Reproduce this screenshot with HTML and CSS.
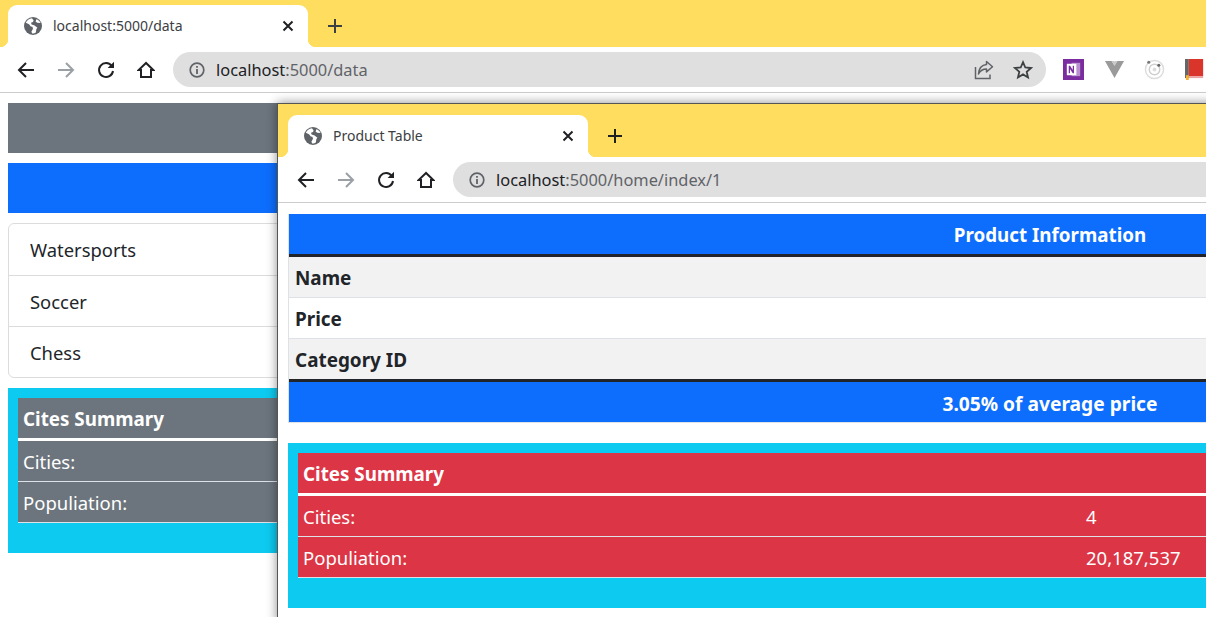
FILE: index.html
```html
<!DOCTYPE html>
<html lang="en">
<head>
    <meta charset="UTF-8">
    <meta name="viewport" content="width=device-width, initial-scale=1.0">
    <title>Product Table</title>
    <link rel="stylesheet" href="styles.css">
</head>
<body>

<svg class="sprite" aria-hidden="true">
    <symbol id="globe" viewBox="0 0 18 18">
        <circle cx="9" cy="9" r="9" fill="#5f6368"/>
        <path d="M8 1.2C5 1.6 2.8 3.4 1.8 5.8L5 7.2l1.8 2.4 1.6.2.6 2-1.6 3 .8 1.6c1.6 0 2.6-.4 3.6-1l.6-3.4 1-1.2-2.8-2.4-3-1-.6-1.6 2-.8.6-1.4z" fill="#fff"/>
        <path d="M12.4 2.2l-.8 2.2 1.6 1.4 3.4.2c-.8-1.8-2.4-3.2-4.2-3.8z" fill="#fff"/>
    </symbol>
    <symbol id="close" viewBox="0 0 12 12">
        <path d="M1.5 1.5l9 9M10.5 1.5l-9 9" fill="none" stroke="#202124" stroke-width="2"/>
    </symbol>
    <symbol id="plus" viewBox="0 0 16 16">
        <path d="M8 1v14M1 8h14" fill="none" stroke="currentColor" stroke-width="2"/>
    </symbol>
    <symbol id="arrow" viewBox="0 0 18 18">
        <path d="M17 9H2M9 2L2 9l7 7" fill="none" stroke="currentColor" stroke-width="2"/>
    </symbol>
    <symbol id="reload" viewBox="0 0 18 18">
        <path d="M14.8 5A7 7 0 1 0 16 10" fill="none" stroke="#202124" stroke-width="2"/>
        <path d="M10.6 7h6.4V.8z" fill="#202124"/>
    </symbol>
    <symbol id="home" viewBox="0 0 18 18">
        <path d="M9 2L1.6 9H4v7h10V9h2.4z" fill="none" stroke="#202124" stroke-width="2" stroke-linejoin="miter"/>
    </symbol>
    <symbol id="info" viewBox="0 0 16 16">
        <circle cx="8" cy="8" r="6.8" fill="none" stroke="#5f6368" stroke-width="1.7"/>
        <path d="M7.1 7h1.8v5H7.1zM7.1 4h1.8v1.8H7.1z" fill="#5f6368"/>
    </symbol>
    <symbol id="share" viewBox="0 0 20 20">
        <path d="M1.5 7v11.5h14.5v-4" fill="none" stroke="#5f6368" stroke-width="1.5"/>
        <path d="M12.5 1.5l6 5.2-6 5.2V9C8.800 9 6.400 10.500 4.500 14c.4-5 3-8.800 8-9.400z" fill="none" stroke="#5f6368" stroke-width="1.5" stroke-linejoin="round"/>
    </symbol>
    <symbol id="star" viewBox="0 0 20 20">
        <path d="M10 2.200l2.300 5.300 5.700.5-4.300 3.800 1.300 5.600-5-3-5 3 1.300-5.600L2 8l5.700-.5z" fill="none" stroke="#3c4043" stroke-width="1.800"/>
    </symbol>
</svg>

<div class="desktop">

    <!-- window behind -->
    <div class="window window-back">
        <div class="tabstrip">
            <div class="tab">
                <svg class="tab-icon"><use href="#globe"/></svg>
                <span class="tab-title">localhost:5000/data</span>
                <svg class="tab-close"><use href="#close"/></svg>
            </div>
            <svg class="new-tab"><use href="#plus"/></svg>
        </div>
        <div class="toolbar">
            <svg class="nav-btn"><use href="#arrow"/></svg>
            <svg class="nav-btn forward"><use href="#arrow"/></svg>
            <svg class="nav-btn"><use href="#reload"/></svg>
            <svg class="nav-btn"><use href="#home"/></svg>
            <div class="omnibox omnibox-short">
                <svg class="info-icon"><use href="#info"/></svg>
                <span class="url">localhost<span class="url-rest">:5000/data</span></span>
                <svg class="omni-action"><use href="#share"/></svg>
                <svg class="omni-action"><use href="#star"/></svg>
            </div>
            <div class="extensions">
                <svg class="ext" viewBox="0 0 22 22">
                    <rect width="22" height="22" fill="#7b2da0"/>
                    <rect x="9" y="4" width="9" height="14" fill="#b98fd0"/>
                    <rect x="4" y="5" width="10" height="12" fill="#fff"/>
                    <path d="M6 15V7h1.400l2.800 4.600V7h1.300v8h-1.300L7.300 10.400V15z" fill="#7b2da0"/>
                </svg>
                <svg class="ext" viewBox="0 0 22 22">
                    <path d="M1 2h7l3 5 3-5h7l-10 18z" fill="#9a9a9a"/>
                    <path d="M8 2l3 5 3-5h-2.500L11 3l-.5-1z" fill="#c8c8c8"/>
                </svg>
                <svg class="ext" viewBox="0 0 22 22">
                    <circle cx="11" cy="11" r="9.500" fill="none" stroke="#dcdcdc" stroke-width="1.500"/>
                    <circle cx="11" cy="11" r="5.500" fill="none" stroke="#cfcfcf" stroke-width="1.500"/>
                    <circle cx="11" cy="11" r="2" fill="#dcdcdc"/>
                    <circle cx="5" cy="3.500" r="1.600" fill="#777"/>
                    <circle cx="15.500" cy="6.500" r="1.600" fill="#666"/>
                </svg>
                <svg class="ext" viewBox="0 0 22 22">
                    <rect x="0" y="0" width="4" height="20" fill="#666"/>
                    <rect x="4" y="0" width="15" height="18" fill="#d9352b"/>
                    <rect x="4" y="18" width="15" height="2" fill="#e8a0a0"/>
                    <rect x="1" y="17" width="3" height="5" fill="#f2b632"/>
                </svg>
            </div>
        </div>
        <div class="page">
            <div class="banner bg-gray"></div>
            <div class="banner bg-blue"></div>
            <ul class="list">
                <li>Watersports</li>
                <li>Soccer</li>
                <li>Chess</li>
            </ul>
            <div class="summary-box">
                <table class="summary bg-gray">
                    <tr class="head"><th colspan="2">Cites Summary</th></tr>
                    <tr><td>Cities:</td><td></td></tr>
                    <tr><td>Populiation:</td><td></td></tr>
                </table>
            </div>
        </div>
    </div>

    <!-- window in front -->
    <div class="window window-front">
        <div class="tabstrip">
            <div class="tab">
                <svg class="tab-icon"><use href="#globe"/></svg>
                <span class="tab-title">Product Table</span>
                <svg class="tab-close"><use href="#close"/></svg>
            </div>
            <svg class="new-tab"><use href="#plus"/></svg>
        </div>
        <div class="toolbar">
            <svg class="nav-btn"><use href="#arrow"/></svg>
            <svg class="nav-btn forward"><use href="#arrow"/></svg>
            <svg class="nav-btn"><use href="#reload"/></svg>
            <svg class="nav-btn"><use href="#home"/></svg>
            <div class="omnibox">
                <svg class="info-icon"><use href="#info"/></svg>
                <span class="url">localhost<span class="url-rest">:5000/home/index/1</span></span>
            </div>
        </div>
        <div class="page page-front">
            <table class="product">
                <thead>
                    <tr><th colspan="2" class="bg-blue">Product Information</th></tr>
                </thead>
                <tbody>
                    <tr class="odd"><th>Name</th><td></td></tr>
                    <tr><th>Price</th><td></td></tr>
                    <tr class="odd"><th>Category ID</th><td></td></tr>
                </tbody>
                <tfoot>
                    <tr><th colspan="2" class="bg-blue">3.05% of average price</th></tr>
                </tfoot>
            </table>
            <div class="summary-box">
                <table class="summary bg-red">
                    <colgroup><col class="label-col"><col></colgroup>
                    <tr class="head"><th colspan="2">Cites Summary</th></tr>
                    <tr><td>Cities:</td><td>4</td></tr>
                    <tr><td>Populiation:</td><td>20,187,537</td></tr>
                </table>
            </div>
        </div>
    </div>

</div>

</body>
</html>
```
FILE: styles.css
```css
html, body {
    margin: 0;
    height: 100%;
    overflow: hidden;
    background-color: #fff;
}
body {
    font-family: "Noto Sans", "Open Sans", Arial, sans-serif;
    color: #212529;
}
.sprite {
    display: none;
}
.desktop {
    position: relative;
    width: 1206px;
    height: 617px;
    overflow: hidden;
}
.window {
    position: absolute;
    background-color: #fff;
}
.window-back {
    left: 0;
    top: 0;
    width: 1206px;
}
.window-front {
    left: 278px;
    top: 104px;
    width: 1544px;
    height: 520px;
    border-left: 1px solid #555;
    border-top: 1px solid #555;
    margin: -1px 0 0 -1px;
    box-shadow: 0 0 10px rgba(0, 0, 0, 0.45);
}

/* browser chrome */
.tabstrip {
    display: flex;
    align-items: flex-end;
    height: 47px;
    background-color: #ffdd5f;
    padding-left: 8px;
    box-sizing: border-box;
}
.window-front .tabstrip {
    height: 53px;
    padding-left: 10px;
}
.tab {
    display: flex;
    align-items: center;
    width: 300px;
    height: 42px;
    padding: 0 14px 0 16px;
    box-sizing: border-box;
    background-color: #fff;
    border-radius: 9px 9px 0 0;
    position: relative;
}
.tab::before,
.tab::after {
    content: "";
    position: absolute;
    bottom: 0;
    width: 8px;
    height: 8px;
    background-color: #fff;
}
.tab::before {
    left: -8px;
    background: radial-gradient(circle at 0 0, #ffdd5f 8px, #fff 8.5px);
}
.tab::after {
    right: -8px;
    background: radial-gradient(circle at 100% 0, #ffdd5f 8px, #fff 8.5px);
}
.tab-icon {
    width: 18px;
    height: 18px;
    flex: none;
}
.tab-title {
    flex: 1;
    margin-left: 11px;
    padding-bottom: 2px;
    font-size: 14px;
    color: #3c4043;
}
.tab-close {
    width: 12px;
    height: 12px;
}
.new-tab {
    width: 16px;
    height: 16px;
    margin: 0 0 13px 19px;
    color: #3c4043;
}
.window-front .new-tab {
    color: #202124;
}
.toolbar {
    display: flex;
    align-items: center;
    height: 46px;
    box-sizing: border-box;
    padding: 0 0 0 17px;
    gap: 22px;
    background-color: #fff;
    border-bottom: 1px solid #ccc;
}
.window-front .toolbar {
    padding-left: 19px;
}
.nav-btn {
    width: 18px;
    height: 18px;
    flex: none;
    color: #202124;
}
.nav-btn.forward {
    color: #9aa0a6;
    transform: scaleX(-1);
}
.omnibox {
    display: flex;
    align-items: center;
    height: 35px;
    flex: 1;
    margin-left: -4px;
    padding: 0 14px 0 16px;
    background-color: #dfdfdf;
    border-radius: 18px;
    box-sizing: border-box;
}
.omnibox-short {
    flex: none;
    width: 873px;
}
.info-icon {
    width: 16px;
    height: 16px;
    flex: none;
}
.url {
    flex: 1;
    margin-left: 11px;
    font-size: 16.4px;
    color: #202124;
}
.url-rest {
    color: #5f6368;
}
.omni-action {
    width: 20px;
    height: 20px;
    margin-left: 20px;
    margin-right: -1px;
}
.extensions {
    display: flex;
    gap: 19.5px;
    margin-left: -5px;
}
.ext {
    width: 21px;
    height: 21px;
    flex: none;
}

/* page content */
.page {
    padding: 10px 8px 0;
}
.page-front {
    padding: 11px 10px 0;
}
.banner {
    height: 50px;
    margin-bottom: 10px;
}
.bg-gray { background-color: #6c757d; }
.bg-blue { background-color: #0d6efd; }
.bg-red { background-color: #dc3545; }
.list {
    list-style: none;
    margin: 0 0 10px;
    padding: 0;
    border: 1px solid #dcdcdc;
    border-radius: 6px;
}
.list li {
    height: 50px;
    line-height: 52px;
    padding-left: 21px;
    font-size: 18.4px;
    border-bottom: 1px solid #dcdcdc;
}
.list li:first-child {
    height: 51px;
}
.list li:last-child {
    border-bottom: none;
}
table {
    width: 100%;
    border-collapse: separate;
    border-spacing: 0;
    table-layout: fixed;
    font-size: 18.5px;
}
th, td {
    box-sizing: border-box;
    padding: 0 5px;
    height: 40px;
    text-align: left;
}
th {
    font-size: 18.8px;
}
.product {
    border: 1px solid #dee2e6;
    border-top: none;
}
.product th {
    padding-top: 2px;
}
.product thead th,
.product tfoot th {
    height: 43px;
    text-align: center;
    color: #fff;
}
.product thead th {
    border-bottom: 3px solid #212529;
}
.product tfoot th {
    border-top: 3px solid #212529;
    font-size: 19.2px;
}
.product tbody th,
.product tbody td {
    height: 41px;
    border-bottom: 1px solid #dee2e6;
}
.product tbody th {
    padding-left: 6px;
    font-size: 18.9px;
}
.product tbody tr:last-child th,
.product tbody tr:last-child td {
    height: 40px;
    border-bottom: none;
}
.product .odd {
    background-color: #f2f2f2;
}
.summary-box {
    padding: 10px 10px 30px;
    background-color: #0dcaf0;
}
.page-front .summary-box {
    margin-top: 20px;
}
.summary {
    color: #fff;
}
.summary .head th {
    height: 43px;
    padding-top: 2px;
    border-bottom: 3px solid #fff;
}
.summary td {
    height: 41px;
    border-bottom: 1px solid #dee2e6;
}
.label-col {
    width: 783px;
}
```
